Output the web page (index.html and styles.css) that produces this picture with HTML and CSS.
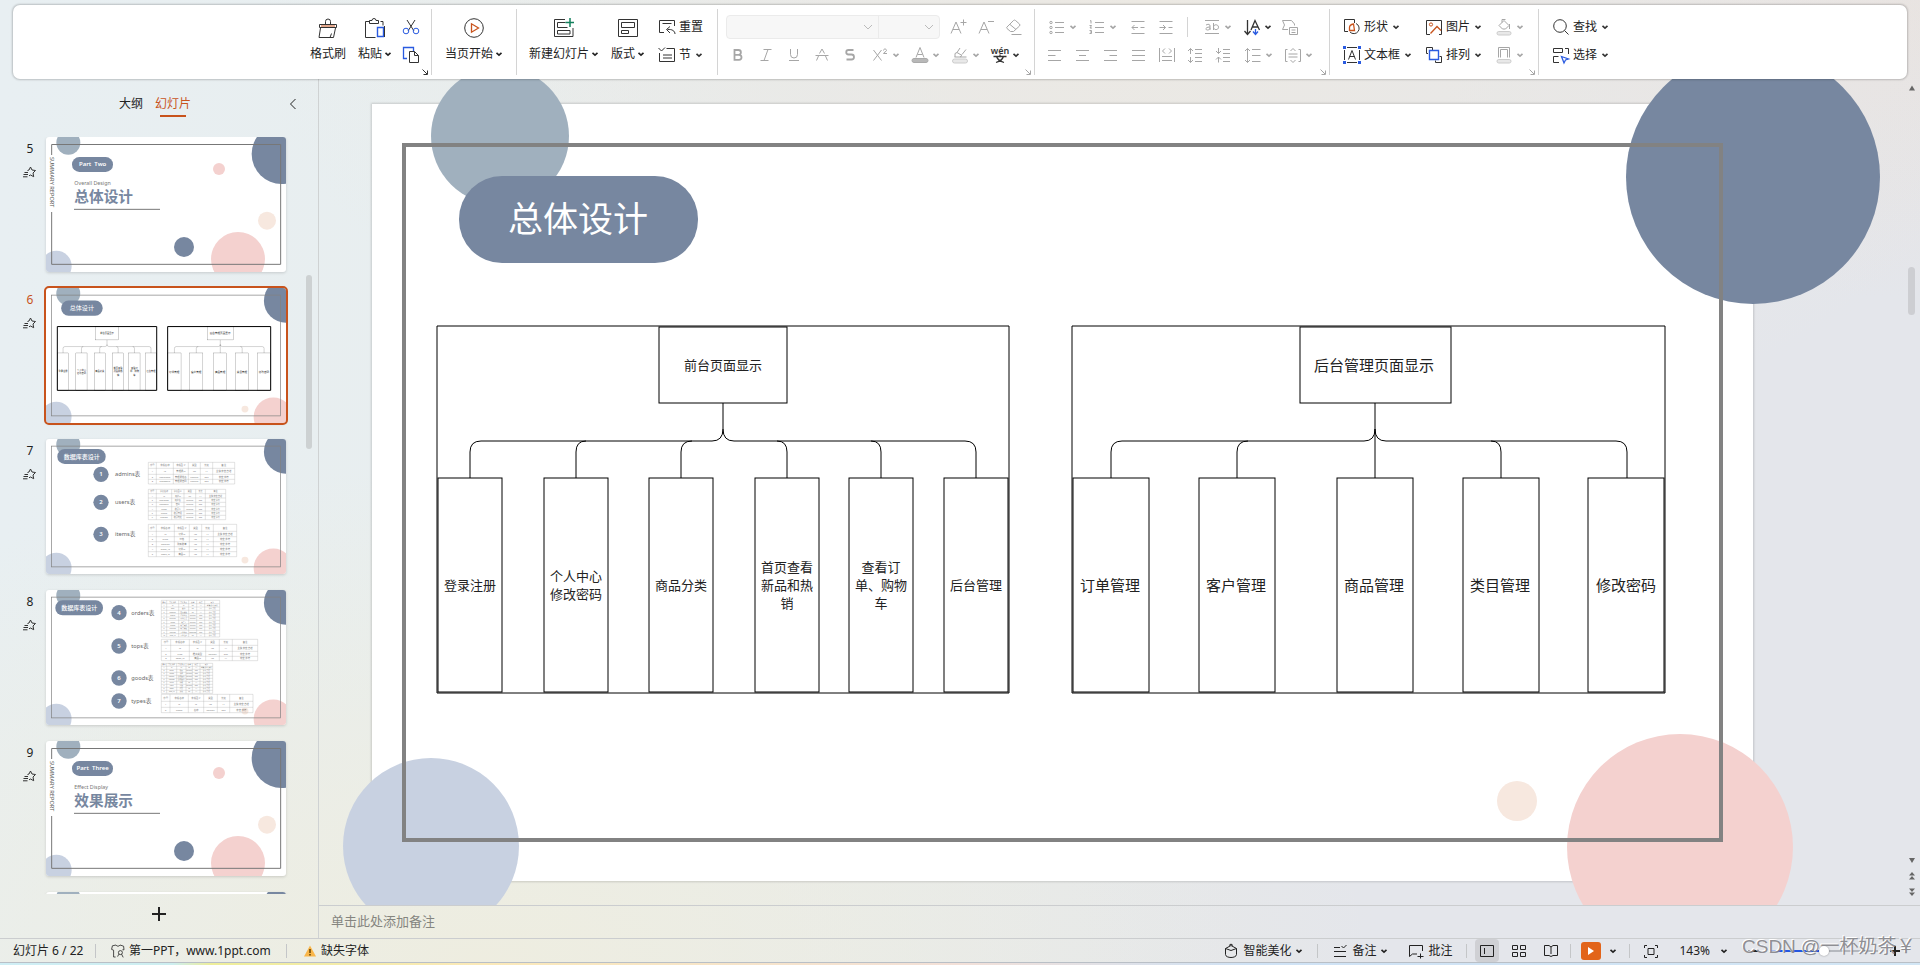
FILE: index.html
```html
<!DOCTYPE html>
<html lang="zh-CN">
<head>
<meta charset="utf-8">
<meta name="viewport" content="width=device-width, initial-scale=1">
<title>演示文稿</title>
<link rel="stylesheet" href="styles.css">
</head>
<body>
<svg class="sprite" aria-hidden="true">
  <defs>
    <symbol id="i-chev" viewBox="0 0 8 8"><path d="M1.5 2.8 4 5.2 6.5 2.8" stroke-width="1.6"/></symbol>
    <symbol id="i-chevw" viewBox="0 0 12 12"><path d="M2 4l4 4 4-4"/></symbol>
    <symbol id="i-launch" viewBox="0 0 6 6"><path d="M.5.5 5 5M5.500 1.500v4h-4"/></symbol>
    <symbol id="i-brush" viewBox="0 0 20 20"><path d="M1.500 6.500h17v3h-17zM7.500 6V3.500a2.500 2.500 0 0 1 5 0V6M2.500 10 1 19.500h14.500L17.500 10M12 19.500l1.500-4"/><path class="or" d="M3 8h14"/></symbol>
    <symbol id="i-paste" viewBox="0 0 20 20"><path d="M4.500 3.500h-4v16h10M15.500 3.500h2.500v4"/><path d="M4.500 2.500h2.500a2 2 0 0 1 4 0h2.500v3h-9z"/><path class="bl" d="M12.500 9.500h6v9h-6z" stroke-width="1.400"/><path d="M19.500 8v11"/></symbol>
    <symbol id="i-cut" viewBox="0 0 20 20"><path d="M6 3l7 11M14 3 7 14"/><circle class="bl" cx="5" cy="14" r="2.800"/><circle class="bl" cx="15" cy="14" r="2.800"/></symbol>
    <symbol id="i-copy" viewBox="0 0 20 20"><path class="bl" d="M6 13.500H2.500v-11h10V6" stroke-width="1.300"/><path d="M8.500 6.500h5l4 4v7h-9zM13.500 6.500v4h4"/></symbol>
    <symbol id="i-play" viewBox="0 0 20 20"><circle cx="10" cy="10" r="9.300"/><path class="or" d="M7.500 5.800v8.400l7-4.200z" stroke-width="1.300"/></symbol>
    <symbol id="i-new" viewBox="0 0 20 20"><path d="M11 1.500H.5v17h18.500V10"/><path d="M11.500 4.500h-8v5h10M3.500 12.500h12.500v3.500H3.500z"/><path class="gr" d="M16 0v9M11.500 4.500h9" stroke-width="1.500"/></symbol>
    <symbol id="i-layout" viewBox="0 0 20 20"><path d="M.5 1.500h19v17H.5z"/><path d="M3.500 4.500h13v5h-13zM3.500 12.500h7v3h-7z"/></symbol>
    <symbol id="i-reset" viewBox="0 0 20 20"><path d="M7 15.500H2.500v-12h15V9M5.500 6.500h9"/><path d="M18 17c0-3-3-5-7.500-4.500M13 9.500l-3.500 3 3.500 3.500"/></symbol>
    <symbol id="i-section" viewBox="0 0 20 20"><path d="M9.500 3.500h8v13h-15V8M1.500 3l3 3 3.500-3.500M6 10h9M6 13h9"/></symbol>
    <symbol id="i-inc" viewBox="0 0 20 20"><path d="M3 16.500 8 5l5 11.500M5 12.500h6M12.500 5.500h6M15.500 2.500v6"/></symbol>
    <symbol id="i-dec" viewBox="0 0 20 20"><path d="M3 16.500 8 5l5 11.500M5 12.500h6M12 4.500h6"/></symbol>
    <symbol id="i-eraser" viewBox="0 0 20 20"><path d="M3 10 9.500 3.500a1.500 1.500 0 0 1 2 0L15.500 7a1.500 1.500 0 0 1 0 2L9.500 14.500H6.500L3 11.500a1 1 0 0 1 0-1.500zM6 7.500l6 5M7.500 17.500h10"/></symbol>
    <symbol id="i-b" viewBox="0 0 20 20"><path d="M6.500 5h4a2.400 2.400 0 0 1 0 4.800h-4zM6.500 9.800h4.500a2.500 2.500 0 0 1 0 5H6.500z" stroke-width="1.800"/></symbol>
    <symbol id="i-i" viewBox="0 0 20 20"><path d="M7.500 4.500h8M4.500 15.500h8M12 4.500 8 15.500"/></symbol>
    <symbol id="i-u" viewBox="0 0 20 20"><path d="M6.500 4v5.500a3.500 3.500 0 0 0 7 0V4M5 15.500h10"/></symbol>
    <symbol id="i-strike" viewBox="0 0 20 20"><path d="M3.500 10.500h13M7.500 8.500 10 4l2.500 4.500M6.500 11 4.500 15.500M13.500 11l2 4.500"/></symbol>
    <symbol id="i-s" viewBox="0 0 20 20"><path d="M13.500 5h-5a2.200 2.200 0 0 0 0 4.500h3a2.400 2.400 0 0 1 0 5h-5" stroke-width="1.800"/></symbol>
    <symbol id="i-sup" viewBox="0 0 20 20"><path d="M3.500 5l8 10.500M11.500 5l-8 10.500M13.500 5.500c0-2 3-2 3 0 0 1-3 2-3 3h3.500"/></symbol>
    <symbol id="i-color" viewBox="0 0 20 20"><path d="M6 12.500 10 2.500l4 10M7.500 9.500h5"/><rect class="fa" x="2" y="13.500" width="16" height="4" rx="2"/></symbol>
    <symbol id="i-hl" viewBox="0 0 20 20"><path d="M4.500 12h12M5 12V8.500l2-1 5 3-2 1.500M7 7.500 10 3M12 9.500l4-5"/><rect class="fb" x="2.500" y="14" width="15" height="4" rx="2"/></symbol>
    <symbol id="i-wen" viewBox="0 0 20 20"><text x="10" y="9" text-anchor="middle" class="wen">wén</text><path d="M3.500 11.500h13M10 9.500v2M6.500 11.500c1 3 4 5 7.500 6M13.500 11.500c-1 3-4 5-7.500 6" stroke-width="1.300"/></symbol>
    <symbol id="i-bullets" viewBox="0 0 20 20"><path d="M8 5.500h9M8 10.500h9M8 15.500h9"/><circle cx="4" cy="5.500" r="1.200"/><circle cx="4" cy="10.500" r="1.200"/><circle cx="4" cy="15.500" r="1.200"/></symbol>
    <symbol id="i-numbers" viewBox="0 0 20 20"><path d="M8 5.500h9M8 10.500h9M8 15.500h9M3 4l1-.5v3M2.500 8.500h2L3 11h2M2.500 13.500h2v3h-2M3 15h1.500"/></symbol>
    <symbol id="i-outdent" viewBox="0 0 20 20"><path d="M3.500 4.500h13M3.500 16.500h13M12.500 10.500h4M10 10.500H4M6.500 8 4 10.500 6.500 13"/></symbol>
    <symbol id="i-indent" viewBox="0 0 20 20"><path d="M3.500 4.500h13M3.500 16.500h13M12.500 10.500h4M3.500 10.500h6M7 8l2.500 2.500L7 13"/></symbol>
    <symbol id="i-ab" viewBox="0 0 20 20"><path d="M3 3.500h14M3 16.500h14M4 8c3-1.500 4-.5 4 1v4M8 10c-5 0-5 3-2.500 3C7 13 8 12 8 11M11.500 6v7M11.500 10c0-3 5-3 5 .2s-5 3.200-5 0"/></symbol>
    <symbol id="i-textdir" viewBox="0 0 20 20"><path d="M5.500 3v14M2.500 14l3 3.500L8.500 14M9 13l4-9.500L17.500 13M10.500 10h5.500" stroke-width="1.300"/><path class="bl" d="M13.500 12v5M11 14.500l2.500 3 2.500-3" stroke-width="1.300"/></symbol>
    <symbol id="i-smart" viewBox="0 0 20 20"><path d="M8 12.500H2.500l2-4.500-2-4.500h9L14.500 7v1.500M9.500 10.500h8v7h-8zM11.500 13h4M11.500 15.500h4"/></symbol>
    <symbol id="i-al" viewBox="0 0 20 20"><path d="M3 5.500h13M3 10.500h7.500M3 15.500h13"/></symbol>
    <symbol id="i-ac" viewBox="0 0 20 20"><path d="M3 5.500h13M6 10.500h7M3 15.500h13"/></symbol>
    <symbol id="i-ar" viewBox="0 0 20 20"><path d="M3 5.500h13M8.500 10.500H16M3 15.500h13"/></symbol>
    <symbol id="i-aj" viewBox="0 0 20 20"><path d="M3 5.500h13M3 10.500h13M3 15.500h13"/></symbol>
    <symbol id="i-dist" viewBox="0 0 20 20"><path d="M2.500 3v14M17.500 3v14M5 11.500h10M5 15.500h10M8 3.500 5.500 6 8 8.500M12 3.500 14.500 6 12 8.500"/></symbol>
    <symbol id="i-lsup" viewBox="0 0 20 20"><path d="M10 4.500h7M10 8.500h7M10 12.500h7M10 16.500h7M5.500 9V3.500M3 6l2.500-2.500L8 6M5.500 12v5.500M3 15l2.500 2.500L8 15"/></symbol>
    <symbol id="i-lsdn" viewBox="0 0 20 20"><path d="M10 4.500h7M10 8.500h7M10 12.500h7M10 16.500h7M5.500 3v5.500M3 6l2.500 2.500L8 6M5.500 17.500V12M3 14.500 5.500 12 8 14.500"/></symbol>
    <symbol id="i-ls" viewBox="0 0 20 20"><path d="M9 4.500h8.500M9 10.500h8.500M9 16.500h8.500M4.500 3.500v14M2 6l2.500-2.500L7 6M2 15l2.500 2.500L7 15"/></symbol>
    <symbol id="i-vmid" viewBox="0 0 20 20"><path d="M4.500 4.500h-2v12h2M15.500 4.500h2v12h-2M5.500 9h9M5.500 12h9M7.500 6 10 3.500 12.500 6M7.500 15l2.500 2.500 2.500-2.500"/></symbol>
    <symbol id="i-shape" viewBox="0 0 20 20"><path d="M6 14.500H2.500v-12h10V6M8 15a5.300 5.300 0 1 0 6-8.500"/><path class="or" d="M7.500 13.500v-3c0-2 1.500-3 4-3.500l1 6.500z" stroke-width="1.300"/></symbol>
    <symbol id="i-textbox" viewBox="0 0 20 20"><path d="M5 2.500h10M5 17.500h10M2.500 5v10M17.500 5v10M6.500 14.500 10 5.500l3.500 9M7.500 11.500h5"/><path class="bf" d="M1 1h3v3H1zM16 1h3v3h-3zM1 16h3v3H1zM16 16h3v3h-3z"/></symbol>
    <symbol id="i-pic" viewBox="0 0 20 20"><path d="M6 17.500H2.500v-14h15v14H15"/><circle class="or" cx="7" cy="7.500" r="1.600"/><path class="or" d="M6.500 16.500 13 9.500l4 4" stroke-width="1.300"/></symbol>
    <symbol id="i-arrange" viewBox="0 0 20 20"><path d="M4 8.500H2.500v-6h6V5M11.500 15.500v2h6v-6h-2"/><path class="bl" d="M5.500 5.500h9v9h-9z" stroke-width="1.400"/></symbol>
    <symbol id="i-fill" viewBox="0 0 20 20"><path d="M5 8.500 10 3.500l5 5-3.500 3.500h-3zM8 5.500V2.500h3.500M15.500 7v5"/><rect class="fb" x="3" y="14.500" width="14" height="3.500" rx="1.700"/></symbol>
    <symbol id="i-outline" viewBox="0 0 20 20"><path d="M4.500 12.500v-10h11v10M6.500 12.500v-8h7v8"/><rect class="fb" x="3" y="14.500" width="14" height="3.500" rx="1.700"/></symbol>
    <symbol id="i-find" viewBox="0 0 20 20"><circle cx="9" cy="9" r="6.300"/><path d="M13.500 13.500 17.500 17.500"/></symbol>
    <symbol id="i-select" viewBox="0 0 20 20"><path d="M8 17.500H2.500v-6h5M2.500 3.500h9v4h-9zM14 3.500h3.500V9"/><path class="bl" d="M10.500 11.500l7 2.500-3 1-1.500 3z" stroke-width="1.300"/></symbol>
    <symbol id="i-star" viewBox="0 0 14 12"><path d="M4.500 4.500 6 4 7.500 1 9 4l3.500.5L10 7l.7 3.700L7.500 9 6 9.800M1.500 6.500H5M.5 8.500H5M0 10.800h4.500"/></symbol>
    <symbol id="i-theme" viewBox="0 0 20 20"><path d="M7 17.500H4.500V9L2 8l1-4.500L7.500 2.500c1 2 4 2 5 0L17 4l.5 4.500h-2"/><circle cx="13" cy="12" r="2.500"/><path d="M11 14l-1.500 3M14.500 14l2 4"/></symbol>
    <symbol id="i-beauty" viewBox="0 0 16 16"><path d="M2.500 5.500 8 2.500l5.500 3-5.500 2zM2.500 5.500v6c0 2 3 3 5.500 3s5.500-1 5.500-3v-6M6 2.500l2-1.500 2 1.500"/></symbol>
    <symbol id="i-notes" viewBox="0 0 16 16"><path d="M2 4.500h6M2 8.500h12M2 13.500h12M9.500 3l2 2 3-3"/></symbol>
    <symbol id="i-comment" viewBox="0 0 16 16"><path d="M14.500 8V2.500h-13v11l3-2.500H9M9.500 13.500h6M12.500 10.500v5"/></symbol>
    <symbol id="i-normal" viewBox="0 0 16 16"><path d="M1.500 2.500h13v11h-13zM5.500 5v6"/></symbol>
    <symbol id="i-grid" viewBox="0 0 16 16"><path d="M1.500 2.500h5v4h-5zM9.500 2.500h5v4h-5zM1.500 9.500h5v4h-5zM9.500 9.500h5v4h-5z"/></symbol>
    <symbol id="i-book" viewBox="0 0 16 16"><path d="M8 13.500 6 12.500H1.500v-10H6l2 1.500 2-1.500h4.500v10H10zM8 4v7"/></symbol>
    <symbol id="i-fit" viewBox="0 0 16 16"><path d="M4 2.500H1.500V5M12 2.500h2.500V5M4 14.500H1.500V12M12 14.500h2.500V12M5 5.500h6v6H5z"/></symbol>

    <!-- Shared background of the content slides -->
    <symbol id="content-bg" viewBox="0 0 1381 777" overflow="visible">
      <circle cx="128" cy="32" r="69" fill="#a0b0be"/>
      <circle cx="1381" cy="73" r="127" fill="#7787a0"/>
      <circle cx="59" cy="742" r="88" fill="#c8d1e1"/>
      <circle cx="1308" cy="743" r="113" fill="#f4d1cf"/>
      <circle cx="1145" cy="697" r="20" fill="#f7e8df"/>
      <rect class="frame" x="32" y="41" width="1317" height="695"/>
    </symbol>
    <!-- Shared background of the chapter slides -->
    <symbol id="cover-bg" viewBox="0 0 720 405">
      <circle cx="67" cy="17" r="36" fill="#a0b0be"/>
      <circle cx="707" cy="51" r="90" fill="#7787a0"/>
      <circle cx="31" cy="387" r="46" fill="#c8d1e1"/>
      <circle cx="576" cy="366" r="81" fill="#f4d1cf"/>
      <circle cx="519" cy="96" r="18" fill="#f4d1cf"/>
      <circle cx="663" cy="251" r="27" fill="#f7e8df"/>
      <circle cx="414" cy="330" r="30" fill="#7787a0"/>
      <path class="thin" d="M17 54V22.500H704V382H17V225"/>
      <path class="thin" d="M84 217H342"/>
      <text class="side" transform="translate(13 60) rotate(90)">SUMMARY REPORT</text>
    </symbol>
  </defs>
</svg>

<header class="ribbon">
  <section class="group clip">
    <button class="big"><svg class="ic"><use href="#i-brush"/></svg><span>格式刷</span></button>
    <button class="big"><svg class="ic"><use href="#i-paste"/></svg><span>粘贴<svg class="ch"><use href="#i-chev"/></svg></span></button>
    <div class="rows">
      <button class="ib" aria-label="剪切"><svg class="ic"><use href="#i-cut"/></svg></button>
      <button class="ib" aria-label="复制"><svg class="ic"><use href="#i-copy"/></svg></button>
    </div>
    <svg class="launch"><use href="#i-launch"/></svg>
  </section>
  <section class="group show">
    <button class="big"><svg class="ic"><use href="#i-play"/></svg><span>当页开始<svg class="ch"><use href="#i-chev"/></svg></span></button>
  </section>
  <section class="group slides">
    <button class="big"><svg class="ic"><use href="#i-new"/></svg><span>新建幻灯片<svg class="ch"><use href="#i-chev"/></svg></span></button>
    <button class="big"><svg class="ic"><use href="#i-layout"/></svg><span>版式<svg class="ch"><use href="#i-chev"/></svg></span></button>
    <div class="rows">
      <button class="lb"><svg class="ic"><use href="#i-reset"/></svg><span>重置</span></button>
      <button class="lb"><svg class="ic"><use href="#i-section"/></svg><span>节</span><svg class="ch"><use href="#i-chev"/></svg></button>
    </div>
  </section>
  <section class="group rows font off">
    <div class="row">
      <div class="combo">
        <button aria-label="字体"><svg class="cv"><use href="#i-chevw"/></svg></button>
        <button aria-label="字号"><svg class="cv"><use href="#i-chevw"/></svg></button>
      </div>
      <button class="tb" aria-label="增大字号"><svg class="ic"><use href="#i-inc"/></svg></button>
      <button class="tb" aria-label="减小字号"><svg class="ic"><use href="#i-dec"/></svg></button>
      <button class="tb" aria-label="清除格式"><svg class="ic"><use href="#i-eraser"/></svg></button>
    </div>
    <div class="row">
      <button class="tb" aria-label="加粗"><svg class="ic"><use href="#i-b"/></svg></button>
      <button class="tb" aria-label="倾斜"><svg class="ic"><use href="#i-i"/></svg></button>
      <button class="tb" aria-label="下划线"><svg class="ic"><use href="#i-u"/></svg></button>
      <button class="tb" aria-label="删除线"><svg class="ic"><use href="#i-strike"/></svg></button>
      <button class="tb" aria-label="阴影"><svg class="ic"><use href="#i-s"/></svg></button>
      <button class="tb dd" aria-label="上标"><svg class="ic"><use href="#i-sup"/></svg><svg class="ch"><use href="#i-chev"/></svg></button>
      <button class="tb dd" aria-label="字体颜色"><svg class="ic"><use href="#i-color"/></svg><svg class="ch"><use href="#i-chev"/></svg></button>
      <button class="tb dd" aria-label="突出显示"><svg class="ic"><use href="#i-hl"/></svg><svg class="ch"><use href="#i-chev"/></svg></button>
      <button class="tb dd on" aria-label="拼音"><svg class="ic"><use href="#i-wen"/></svg><svg class="ch"><use href="#i-chev"/></svg></button>
    </div>
    <svg class="launch"><use href="#i-launch"/></svg>
  </section>
  <section class="group rows para off">
    <div class="row">
      <button class="tb dd" aria-label="项目符号"><svg class="ic"><use href="#i-bullets"/></svg><svg class="ch"><use href="#i-chev"/></svg></button>
      <button class="tb dd" aria-label="编号"><svg class="ic"><use href="#i-numbers"/></svg><svg class="ch"><use href="#i-chev"/></svg></button>
      <button class="tb gapl" aria-label="减少缩进"><svg class="ic"><use href="#i-outdent"/></svg></button>
      <button class="tb" aria-label="增加缩进"><svg class="ic"><use href="#i-indent"/></svg></button>
      <i class="vsep"></i>
      <button class="tb dd" aria-label="字符间距"><svg class="ic"><use href="#i-ab"/></svg><svg class="ch"><use href="#i-chev"/></svg></button>
      <button class="tb dd on" aria-label="文字方向"><svg class="ic"><use href="#i-textdir"/></svg><svg class="ch"><use href="#i-chev"/></svg></button>
      <button class="tb" aria-label="转智能图形"><svg class="ic"><use href="#i-smart"/></svg></button>
    </div>
    <div class="row">
      <button class="tb" aria-label="左对齐"><svg class="ic"><use href="#i-al"/></svg></button>
      <button class="tb" aria-label="居中"><svg class="ic"><use href="#i-ac"/></svg></button>
      <button class="tb" aria-label="右对齐"><svg class="ic"><use href="#i-ar"/></svg></button>
      <button class="tb" aria-label="两端对齐"><svg class="ic"><use href="#i-aj"/></svg></button>
      <button class="tb" aria-label="分散对齐"><svg class="ic"><use href="#i-dist"/></svg></button>
      <button class="tb" aria-label="增大段距"><svg class="ic"><use href="#i-lsup"/></svg></button>
      <button class="tb" aria-label="减小段距"><svg class="ic"><use href="#i-lsdn"/></svg></button>
      <button class="tb dd" aria-label="行距"><svg class="ic"><use href="#i-ls"/></svg><svg class="ch"><use href="#i-chev"/></svg></button>
      <button class="tb dd" aria-label="垂直对齐"><svg class="ic"><use href="#i-vmid"/></svg><svg class="ch"><use href="#i-chev"/></svg></button>
    </div>
    <svg class="launch"><use href="#i-launch"/></svg>
  </section>
  <section class="group draw">
    <button class="lb"><svg class="ic"><use href="#i-shape"/></svg><span>形状</span><svg class="ch"><use href="#i-chev"/></svg></button>
    <button class="lb"><svg class="ic"><use href="#i-pic"/></svg><span>图片</span><svg class="ch"><use href="#i-chev"/></svg></button>
    <button class="tb dd off" aria-label="填充"><svg class="ic"><use href="#i-fill"/></svg><svg class="ch"><use href="#i-chev"/></svg></button>
    <button class="lb"><svg class="ic"><use href="#i-textbox"/></svg><span>文本框</span><svg class="ch"><use href="#i-chev"/></svg></button>
    <button class="lb"><svg class="ic"><use href="#i-arrange"/></svg><span>排列</span><svg class="ch"><use href="#i-chev"/></svg></button>
    <button class="tb dd off" aria-label="轮廓"><svg class="ic"><use href="#i-outline"/></svg><svg class="ch"><use href="#i-chev"/></svg></button>
    <svg class="launch off"><use href="#i-launch"/></svg>
  </section>
  <section class="group rows edit">
    <button class="lb"><svg class="ic"><use href="#i-find"/></svg><span>查找</span><svg class="ch"><use href="#i-chev"/></svg></button>
    <button class="lb"><svg class="ic"><use href="#i-select"/></svg><span>选择</span><svg class="ch"><use href="#i-chev"/></svg></button>
  </section>
</header>

<div class="workspace">
  <aside class="panel">
    <nav class="tabs">
      <button class="tab">大纲</button>
      <button class="tab active">幻灯片</button>
      <button class="collapse" aria-label="收起"><svg viewBox="0 0 8 12"><path d="M6.500 1 1.500 6l5 5"/></svg></button>
    </nav>
    <ol class="list">
      <li class="item"><div class="num">5<svg class="st"><use href="#i-star"/></svg></div>
        <svg class="thumb" viewBox="0 0 720 405"><use href="#cover-bg"/>
          <rect class="pill" x="78" y="60" width="123" height="45" rx="22"/><text class="part" x="140" y="88" xml:space="preserve">Part  Two</text>
          <text class="sub" x="85" y="143">Overall Design</text><text class="chap" x="85" y="195">总体设计</text></svg></li>
      <li class="item current"><div class="num">6<svg class="st"><use href="#i-star"/></svg></div>
        <svg class="thumb" viewBox="0 0 1381 777"><use href="#slide-art"/></svg></li>
      <li class="item"><div class="num">7<svg class="st"><use href="#i-star"/></svg></div>
        <svg class="thumb" viewBox="0 0 720 405" data-tables="7"><use href="#content-bg" width="720" height="405"/>
          <rect class="pill" x="34" y="30" width="145" height="45" rx="22"/><text class="ttl" x="107" y="60">数据库表设计</text></svg></li>
      <li class="item"><div class="num">8<svg class="st"><use href="#i-star"/></svg></div>
        <svg class="thumb" viewBox="0 0 720 405" data-tables="8"><use href="#content-bg" width="720" height="405"/>
          <rect class="pill" x="28" y="31" width="143" height="45" rx="22"/><text class="ttl" x="100" y="60">数据库表设计</text></svg></li>
      <li class="item"><div class="num">9<svg class="st"><use href="#i-star"/></svg></div>
        <svg class="thumb" viewBox="0 0 720 405"><use href="#cover-bg"/>
          <rect class="pill" x="78" y="60" width="123" height="45" rx="22"/><text class="part" x="140" y="88" xml:space="preserve">Part  Three</text>
          <text class="sub" x="85" y="143">Effect Display</text><text class="chap" x="85" y="195">效果展示</text></svg></li>
      <li class="item"><div class="num"></div>
        <svg class="thumb" viewBox="0 0 720 405"><use href="#content-bg" width="720" height="405"/></svg></li>
    </ol>
    <i class="panel-thumb"></i>
    <button class="add" aria-label="新建幻灯片"><svg viewBox="0 0 14 14"><path d="M7 0v14M0 7h14"/></svg></button>
  </aside>

  <main class="editor">
    <div class="stage">
      <div class="canvas">
        <svg class="slide" viewBox="0 0 1381 777">
          <g id="slide-art">
            <use href="#content-bg" width="1381" height="777"/>
            <rect class="pill" x="87" y="72" width="239" height="87" rx="43"/>
            <text class="title" x="206" y="128">总体设计</text>
            <g class="chart">
              <rect class="outer" x="65" y="222" width="572" height="367"/>
              <rect x="287" y="223" width="128" height="76"/>
              <path d="M351 299V325M98 374V348Q98 337 109 337H340Q351 337 351 325Q351 337 362 337H593Q604 337 604 348V374M204 374V348Q204 337 214 337M309 374V348Q309 337 320 337M405 337Q415 337 415 348V374M499 337Q509 337 509 348V374"/>
              <rect x="66" y="374" width="64" height="214"/><rect x="172" y="374" width="64" height="214"/><rect x="277" y="374" width="64" height="214"/><rect x="383" y="374" width="64" height="214"/><rect x="477" y="374" width="64" height="214"/><rect x="572" y="374" width="64" height="214"/>
              <text x="351" y="266">前台页面显示</text>
              <text x="98" y="486">登录注册</text>
              <text><tspan x="204" y="477">个人中心</tspan><tspan x="204" y="495">修改密码</tspan></text>
              <text x="309" y="486">商品分类</text>
              <text><tspan x="415" y="468">首页查看</tspan><tspan x="415" y="486">新品和热</tspan><tspan x="415" y="504">销</tspan></text>
              <text><tspan x="509" y="468">查看订</tspan><tspan x="509" y="486">单、购物</tspan><tspan x="509" y="504">车</tspan></text>
              <text x="604" y="486">后台管理</text>
            </g>
            <g class="chart wide">
              <rect class="outer" x="700" y="222" width="593" height="367"/>
              <rect x="928" y="223" width="151" height="76"/>
              <path d="M1003 299V374M739 374V348Q739 337 750 337H992Q1003 337 1003 325Q1003 337 1014 337H1244Q1255 337 1255 348V374M865 374V348Q865 337 876 337M1119 337Q1129 337 1129 348V374"/>
              <rect x="701" y="374" width="76" height="214"/><rect x="827" y="374" width="76" height="214"/><rect x="965" y="374" width="76" height="214"/><rect x="1091" y="374" width="76" height="214"/><rect x="1216" y="374" width="76" height="214"/>
              <text x="1002" y="267">后台管理页面显示</text>
              <text x="738" y="487">订单管理</text><text x="864" y="487">客户管理</text><text x="1002" y="487">商品管理</text><text x="1128" y="487">类目管理</text><text x="1254" y="487">修改密码</text>
            </g>
          </g>
        </svg>
      </div>
      <div class="rail">
        <svg class="ra" viewBox="0 0 8 8"><path d="M4 1.500 7 6.500H1z"/></svg>
        <i class="rail-thumb"></i>
        <svg class="ra" viewBox="0 0 8 8"><path d="M1 2h6L4 7z"/></svg>
        <svg class="ra" viewBox="0 0 8 8"><path d="M4 0 7 3.500H1zM4 4 7 7.500H1z"/></svg>
        <svg class="ra" viewBox="0 0 8 8"><path d="M1 .5h6L4 4zM1 4.500h6L4 8z"/></svg>
      </div>
    </div>
    <input class="notes" type="text" placeholder="单击此处添加备注" aria-label="备注">
  </main>
</div>

<footer class="status">
  <span class="pages">幻灯片 6 / 22</span><i class="s"></i>
  <button class="theme"><svg class="i16"><use href="#i-theme"/></svg>第一PPT，www.1ppt.com</button><i class="s"></i>
  <button class="miss"><svg class="warn" viewBox="0 0 12 12"><path d="M6 .5 12 11.500H0z" fill="#f9b64a"/><path d="M6 4v4M6 9v1.500" stroke="#5a3a00" stroke-width="1.400"/></svg>缺失字体</button>
  <span class="grow"></span>
  <button class="t1"><svg class="i16"><use href="#i-beauty"/></svg>智能美化<svg class="ch"><use href="#i-chev"/></svg></button><i class="s"></i>
  <button class="t2"><svg class="i16"><use href="#i-notes"/></svg>备注<svg class="ch"><use href="#i-chev"/></svg></button>
  <button class="t3"><svg class="i16"><use href="#i-comment"/></svg>批注</button><i class="s"></i>
  <button class="view sel" aria-label="普通视图"><svg class="i16"><use href="#i-normal"/></svg></button>
  <button class="view" aria-label="幻灯片浏览"><svg class="i16"><use href="#i-grid"/></svg></button>
  <button class="view" aria-label="阅读视图"><svg class="i16"><use href="#i-book"/></svg></button><i class="s"></i>
  <button class="run" aria-label="播放"><b><svg viewBox="0 0 20 18"><path d="M7 5v8l6-4z"/></svg></b><svg class="ch"><use href="#i-chev"/></svg></button><i class="s"></i>
  <button class="view" aria-label="适应窗口"><svg class="i16"><use href="#i-fit"/></svg></button>
  <button class="zoom">143%<svg class="ch"><use href="#i-chev"/></svg></button>
  <div class="slider">
    <button aria-label="缩小"><svg class="pm" viewBox="0 0 10 10"><path d="M0 5h10"/></svg></button>
    <input type="range" min="0" max="100" value="50" aria-label="缩放">
    <button aria-label="放大"><svg class="pm" viewBox="0 0 10 10"><path d="M0 5h10M5 0v10"/></svg></button>
    <em class="mark">CSDN @一杯奶茶￥</em>
  </div>
</footer>
<div class="strip"></div>
<script src="thumbs.js"></script>
</body>
</html>
```
FILE: thumbs.js
```js
// Draws the miniature database tables inside the slide thumbnails.
const HEAD = ['序号', '字段名称', '字段含义', '类型', '长度', '备注'];
const NOTE = '非空,字符';
const steps = (from, count, size) => Array.from({ length: count + 1 }, (_, i) => from + i * size);

const PAGES = {
  7: {
    cx: 165, lx: 207,
    sets: [
      { n: 1, y: 106, name: 'admins表', cols: [307, 331, 382, 427, 463, 500, 566], rows: [70, 88, 106, 121, 135],
        data: [['id', '管理员id', 'int'], ['username', '管理员姓名', 'varchar'], ['password', '管理员密码', 'varchar']] },
      { n: 2, y: 190, name: 'users表', cols: [307, 331, 377, 414, 449, 478, 539], rows: steps(151, 7, 13),
        data: [['id', '用户id', 'int'], ['username', '用户名', 'varchar'], ['password', '密码', 'varchar'], ['name', '收货人', 'varchar'], ['phone', '收货电话', 'varchar'], ['address', '收货地址', 'varchar']] },
      { n: 3, y: 286, name: 'items表', cols: [307, 331, 385, 430, 467, 502, 572], rows: [256, 277, 293, 308, 323, 338, 353],
        data: [['id', '订单id', 'int'], ['price', '价格', 'int'], ['amount', '购买数量', 'int'], ['order_id', '订单id', 'int'], ['good_id', '商品id', 'int']] }
    ]
  },
  8: {
    cx: 219, lx: 256,
    sets: [
      { n: 4, y: 68, name: 'orders表', cols: [346, 362, 398, 428, 452, 476, 521], rows: steps(31, 11, 10),
        data: [['id', 'id', 'int'], ['total', '总价', 'int'], ['amount', '商品总数', 'int'], ['status', '订单状态', 'varchar'], ['paytype', '支付方式', 'varchar'], ['name', '收货人', 'varchar'], ['phone', '收货电话', 'varchar'], ['address', '收货地址', 'varchar'], ['systime', '下单时间', 'datetime'], ['user_id', '下单用户', 'int']] },
      { n: 5, y: 168, name: 'tops表', cols: [346, 374, 430, 479, 520, 559, 635], rows: [148, 166, 184, 199, 212],
        data: [['id', 'id', 'int'], ['type', '推荐类型', 'varchar'], ['good_id', '商品id', 'int']] },
      { n: 6, y: 264, name: 'goods表', cols: [346, 362, 392, 420, 439, 462, 500], rows: steps(220, 10, 9),
        data: [['id', 'id', 'int'], ['cover', '封面', 'varchar'], ['name', '名称', 'varchar'], ['image1', '细节图片', 'varchar'], ['image2', '细节图片', 'varchar'], ['price', '价格', 'int'], ['intro', '介绍', 'varchar'], ['stock', '库存', 'int'], ['type_id', '分类', 'int']] },
      { n: 7, y: 333, name: 'types表', cols: [346, 372, 427, 473, 514, 551, 621], rows: [313, 334, 352, 368],
        data: [['id', 'id', 'int'], ['name', '名称', 'varchar']] }
    ]
  }
};

const cellText = (x, y, size, text) => `<text class="cell" font-size="${size}" x="${x}" y="${y}">${text}</text>`;

function table({ cols, rows, data }) {
  const left = cols[0], right = cols[cols.length - 1];
  const top = rows[0], bottom = rows[rows.length - 1];
  const d = rows.map(y => `M${left} ${y}H${right}`).join('') + cols.map(x => `M${x} ${top}V${bottom}`).join('');
  let out = `<path class="grid" d="${d}"/>`;
  const width = cols[2] - cols[1];
  const size = width > 48 ? 7 : width > 40 ? 6 : 5;
  const lines = [HEAD, ...data.map((r, i) => [i + 1, ...r, r[2] === 'int' ? 11 : 255, i ? NOTE : '主键,非空,自增'])];
  lines.forEach((line, r) => line.forEach((value, c) => {
    out += cellText((cols[c] + cols[c + 1]) / 2, (rows[r] + rows[r + 1]) / 2 + size / 3, size, value);
  }));
  return out;
}

document.querySelectorAll('[data-tables]').forEach(svg => {
  const page = PAGES[svg.dataset.tables];
  svg.insertAdjacentHTML('beforeend', page.sets.map(s =>
    `<circle class="pill" cx="${page.cx}" cy="${s.y}" r="23"/><text class="no" x="${page.cx}" y="${s.y + 6}">${s.n}</text>` +
    `<text class="tname" x="${page.lx}" y="${s.y + 6}">${s.name}</text>` + table(s)).join(''));
});
```
FILE: styles.css
```css
* { box-sizing: border-box; }

body {
  margin: 0;
  height: 100vh;
  display: flex;
  flex-direction: column;
  overflow: hidden;
  font: 12px/16px "Noto Sans", "Noto Sans CJK SC", sans-serif;
  color: #222;
  background:
    radial-gradient(ellipse 900px 500px at 25% 100%, #eeede0 0%, rgba(238, 237, 224, 0) 100%),
    radial-gradient(ellipse 900px 500px at 60% 0%, #ece9e3 0%, rgba(236, 233, 227, 0) 100%),
    radial-gradient(ellipse 500px 300px at 100% 0%, #e8e3e1 0%, rgba(232, 227, 225, 0) 100%),
    linear-gradient(90deg, #e8eff2 0%, #e8eeef 25%, #e4e6eb 65%, #e4e6eb 100%);
}

button {
  border: 0;
  padding: 0;
  margin: 0;
  background: none;
  font: inherit;
  color: inherit;
  white-space: nowrap;
}

svg { fill: none; stroke: currentColor; flex: none; }
svg text { stroke: none; fill: currentColor; }
.sprite { position: absolute; width: 0; height: 0; }

.or { stroke: #c8531c; }
.bl { stroke: #2a5be0; }
.gr { stroke: #12805c; }
.bf { fill: #2a5be0; stroke: none; }
.fa { fill: #b8b8b8; stroke: #aaa; }
.fb { fill: #e8e8e8; stroke: #ccc; }
.wen { font: 600 9px "Noto Sans", sans-serif; }

.ic { width: 20px; height: 20px; }
.ch { width: 8px; height: 8px; }

/* Ribbon */
.ribbon {
  position: relative;
  z-index: 2;
  flex: none;
  display: flex;
  height: 74px;
  margin: 5px 13px 0;
  padding-left: 291px;
  background: #fff;
  border-radius: 7px;
  box-shadow: 0 0 2px 1px rgba(0, 0, 0, .2);
}

.group {
  position: relative;
  flex: none;
  display: flex;
  padding-top: 8px;
  color: #333;
}
.group::after {
  content: "";
  position: absolute;
  right: 0;
  top: 4px;
  bottom: 4px;
  width: 1px;
  background: #d4d4d4;
}
.group.edit::after { display: none; }
.clip { padding-left: 6px; padding-right: 11px; gap: 12px; }
.clip .rows { margin-left: -3px; }
.show { padding-left: 13px; padding-right: 14px; }
.slides { padding-left: 12px; width: 201px; gap: 12px; }

.big {
  display: flex;
  flex-direction: column;
  align-items: center;
  gap: 8px;
  padding-top: 5px;
}
.big span { display: flex; align-items: center; gap: 2px; color: #222; }

.rows { display: flex; flex-direction: column; }
.row { display: flex; align-items: center; height: 28px; }
.ib { width: 20px; height: 28px; display: flex; align-items: center; }
.lb { height: 28px; display: flex; align-items: center; }
.lb span { margin: 0 4px 0 2px; color: #222; }
.tb { width: 28px; height: 28px; display: flex; align-items: center; justify-content: center; }
.tb.dd { width: 40px; justify-content: flex-start; padding-left: 6px; gap: 2px; }
.group.off, .off { color: #a6a6a6; }
.on { color: #333; }

.launch { position: absolute; right: 4px; bottom: 4px; width: 6px; height: 6px; }

.font { width: 317px; padding-left: 6px; }
.combo {
  display: flex;
  width: 214px;
  height: 24px;
  margin: 0 4px 0 2px;
  border: 1px solid #ebebeb;
  border-radius: 4px;
  background: #f7f7f7;
}
.combo button { display: flex; align-items: center; justify-content: flex-end; padding-right: 4px; color: #bbb; }
.combo button:first-child { flex: 1; border-right: 1px solid #ebebeb; }
.combo button:last-child { width: 60px; }
.cv { width: 12px; height: 12px; }

.para { width: 295px; padding-left: 6px; }
.gapl { margin-left: 3px; }
.vsep { width: 1px; height: 20px; margin: 0 8px 0 7px; background: #d4d4d4; }

.draw {
  display: grid;
  grid-template-columns: 82px 64px 40px;
  grid-auto-rows: 28px;
  padding-left: 12px;
  padding-right: 11px;
}
.edit { padding-left: 12px; }

/* Workspace */
.workspace { flex: 1; min-height: 0; display: flex; }

.panel {
  position: relative;
  flex: none;
  width: 319px;
  display: flex;
  flex-direction: column;
  border-right: 1px solid #cfd2d3;
}
.tabs { display: flex; align-items: center; height: 58px; padding: 0 21px 8px 119px; gap: 12px; }
.tab { height: 26px; padding-top: 2px; border-bottom: 2px solid transparent; }
.tab.active {
  color: #c8531c;
  background: linear-gradient(#c8531c, #c8531c) center bottom / 26px 2px no-repeat border-box;
}
.collapse { margin-left: auto; display: flex; }
.collapse svg { width: 8px; height: 12px; }

.list {
  flex: 1;
  min-height: 0;
  overflow: hidden;
  list-style: none;
  margin: 0;
  padding: 0 0 0 22px;
  display: flex;
  flex-direction: column;
  gap: 16px;
}
.item { flex: none; display: flex; height: 135px; }
.num {
  width: 24px;
  padding: 4px 8px 0 0;
  display: flex;
  flex-direction: column;
  align-items: center;
  gap: 9px;
}
.st { width: 14px; height: 12px; color: #333; }
.thumb {
  width: 240px;
  height: 135px;
  background: #fff;
  border-radius: 3px;
  box-shadow: 0 1px 3px rgba(0, 0, 0, .15);
  overflow: hidden;
}
.current .num { color: #c8531c; }
.current .thumb { outline: 2px solid #c8531c; }

.panel-thumb {
  position: absolute;
  right: 6px;
  top: 196px;
  width: 6px;
  height: 174px;
  border-radius: 3px;
  background: #cdd1d2;
}
.add { height: 44px; display: flex; align-items: center; justify-content: center; padding-bottom: 4px; }
.add svg { width: 14px; height: 14px; stroke-width: 2; }

/* Slide art */
.frame { fill: none; stroke: #828282; stroke-width: 4; }
.thin { stroke: #777; stroke-width: 3; }
.pill { fill: #7787a0; stroke: none; }
#content-bg circle, #cover-bg circle { stroke: none; }
.side { font-size: 17px; fill: #555; }
.part { font-size: 18px; font-weight: 600; text-anchor: middle; fill: #fff; }
.sub { font-size: 16px; fill: #777; }
.chap { font-size: 44px; font-weight: 700; fill: #7787a0; }
.ttl { font-size: 18px; font-weight: 500; text-anchor: middle; fill: #fff; }
.no { font-size: 18px; font-weight: 600; text-anchor: middle; fill: #fff; }
.tname { font-size: 17px; fill: #666; }
.cell { text-anchor: middle; fill: #777; }
.grid { stroke: #aaa; stroke-width: 1; }
.title { font-size: 35px; font-weight: 400; text-anchor: middle; fill: #fff; }
.chart { fill: none; stroke: #000; stroke-width: 1; }
.chart .outer { vector-effect: non-scaling-stroke; }
.chart text { font-size: 13px; text-anchor: middle; fill: #222; }
.chart.wide text { font-size: 15px; }

/* Editor */
.editor { flex: 1; min-width: 0; display: flex; flex-direction: column; }
.stage { flex: 1; min-height: 0; display: flex; overflow: hidden; }
.canvas { flex: 1; padding: 25px 150px 24px 53px; }
.slide {
  display: block;
  width: 100%;
  overflow: visible;
  background: #fff;
  box-shadow: 0 0 2px 1px rgba(0, 0, 0, .15);
}
.rail {
  flex: none;
  width: 17px;
  display: flex;
  flex-direction: column;
  align-items: center;
  gap: 8px;
  padding: 5px 0 9px;
  color: #666;
}
.ra { width: 8px; height: 8px; fill: #666; stroke: none; }
.rail-thumb { width: 7px; height: 48px; margin: 167px 0 auto; border-radius: 4px; background: #cdced2; }

.notes {
  flex: none;
  height: 33px;
  padding: 0 12px 4px;
  border: 0;
  border-top: 1px solid #cbcdcf;
  background: none;
  font: 13px/16px "Noto Sans CJK SC", sans-serif;
}
.notes::placeholder { color: #85857f; opacity: 1; }

/* Status bar */
.status {
  flex: none;
  display: flex;
  align-items: center;
  height: 25px;
  padding-left: 13px;
  border-top: 1px solid #cbcdcf;
  border-bottom: 1px solid #b9bfc6;
}
.status > button { display: flex; align-items: center; }
.s { width: 1px; height: 14px; background: #c4c6c8; }
.i16 { width: 16px; height: 16px; }
.pages { width: 82px; }
.theme { width: 190px; padding-left: 14px; gap: 3px; }
.miss { padding-left: 17px; gap: 5px; }
.warn { width: 12px; height: 12px; stroke: none; }
.grow { flex: 1; }
.t1 { width: 94px; gap: 4px; }
.t2 { width: 76px; padding-left: 14px; gap: 4px; }
.t3 { width: 72px; padding-left: 14px; gap: 4px; }
.view { width: 24px; height: 23px; margin: 0 4px; justify-content: center; }
.t3 + .s { margin-right: 4px; }
.view.sel { background: #cfd0d4; border-radius: 4px; }
.view + .s { margin-left: 3px; }
.run { padding: 0 12px 0 10px; gap: 8px; }
.run b { display: flex; width: 20px; height: 18px; border-radius: 3px; background: #e2641a; }
.run path { fill: #fff; stroke: none; }
.run + .s { margin-right: 5px; }
.zoom { margin-left: 12px; gap: 10px; }
.slider {
  position: relative;
  display: flex;
  align-items: center;
  gap: 12px;
  width: 158px;
  margin: 0 20px 0 14px;
  padding-left: 6px;
}
.slider button { display: flex; }
.pm { width: 10px; height: 10px; stroke-width: 2; }
.slider input {
  flex: 1;
  min-width: 0;
  height: 12px;
  margin: 0;
  appearance: none;
  background: linear-gradient(90deg, #2456e0 50%, #b5b8be 50%) center / 100% 2px no-repeat;
}
.slider input::-webkit-slider-thumb {
  appearance: none;
  width: 10px;
  height: 10px;
  border-radius: 50%;
  background: #fff;
  box-shadow: 0 0 2px rgba(0, 0, 0, .4);
}
.mark {
  position: absolute;
  left: 0;
  bottom: -2px;
  font: 19px/24px "Liberation Sans", "Noto Sans CJK SC", sans-serif;
  color: rgba(130, 130, 135, .9);
  text-shadow: -1px -1px 0 #fff;
  white-space: nowrap;
}
.strip {
  flex: none;
  height: 2px;
  background: linear-gradient(90deg, #cfeef5 0%, #cdeef0 9%, #eeee9a 11%, #fbe9b8 25%, #f3e0d8 50%, #cfe2f5 65%, #d2e6f5 100%);
}
```
